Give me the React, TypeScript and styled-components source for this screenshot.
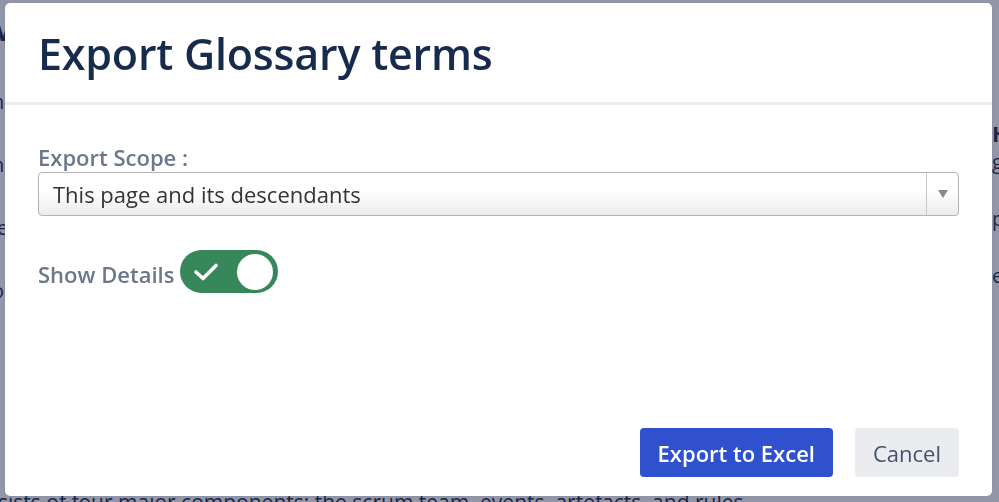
import React, {useState} from 'react';
import styled, {createGlobalStyle} from 'styled-components';

const GlobalStyle = createGlobalStyle`
  html, body {
    margin: 0;
    padding: 0;
    background: #ffffff;
    font-family: "Open Sans", "Noto Sans", "Liberation Sans", sans-serif;
  }
`;

function App() {
    const [details, setDetails] = useState(true);

    return (
        <>
            <GlobalStyle/>
            <Page>
                <LeftColumn>
                    <h1>V</h1>
                    <p>n</p>
                    <p>n</p>
                    <p>le</p>
                    <p>o</p>
                </LeftColumn>
                <RightColumn>
                    <h3>H</h3>
                    <a>g</a>
                    <p>p</p>
                    <p>e</p>
                </RightColumn>
                <BottomLine>sists of four major components: the scrum team, events, artefacts, and rules.</BottomLine>
            </Page>
            <Blanket>
                <Modal>
                    <Header>
                        <Title>Export Glossary terms</Title>
                    </Header>
                    <Body>
                        <Label>Export Scope :</Label>
                        <Select>
                            <SelectText>This page and its descendants</SelectText>
                            <SelectArrow>
                                <svg width="10" height="8" viewBox="0 0 10 8">
                                    <path d="M0 0 L10 0 L5 8 Z" fill="#888"/>
                                </svg>
                            </SelectArrow>
                        </Select>
                        <ToggleRow>
                            <ToggleLabel>Show Details</ToggleLabel>
                            <Toggle $on={details} onClick={() => setDetails(!details)}>
                                <svg width="26" height="20" viewBox="0 0 26 20">
                                    <path d="M3 10 L10 16.5 L23 3.5" fill="none" stroke="#fff" strokeWidth="3.6"
                                          strokeLinecap="round" strokeLinejoin="round"/>
                                </svg>
                                <Knob/>
                            </Toggle>
                        </ToggleRow>
                    </Body>
                    <Footer>
                        <Button $primary>Export to Excel</Button>
                        <Button>Cancel</Button>
                    </Footer>
                </Modal>
            </Blanket>
        </>
    )
}

const Page = styled.div`
  position: relative;
  width: 999px;
  height: 502px;
  overflow: hidden;
  color: #172b4d;
  font-size: 20px;
`;
const LeftColumn = styled.div`
  margin-left: -8px;
  h1 {
    margin: 8px 0 40px;
    font-size: 36px;
    font-weight: 600;
    line-height: 40px;
  }
  p {
    margin: 0 0 36px;
  }
`;
const RightColumn = styled.div`
  position: absolute;
  top: 118px;
  left: 992px;
  h3 {
    margin: 0;
    font-size: 22px;
  }
  a {
    display: block;
    text-decoration: underline;
  }
  p {
    margin: 30px 0 0;
  }
`;
const BottomLine = styled.div`
  position: absolute;
  left: -2px;
  top: 488px;
  white-space: nowrap;
  font-size: 21px;
`;
const Blanket = styled.div`
  position: fixed;
  inset: 0;
  background: rgba(30, 35, 70, 0.48);
  display: flex;
  padding: 3px 7px 6px 5px;
  box-sizing: border-box;
`;
const Modal = styled.div`
  flex: 1;
  background: #fff;
  border-radius: 5px;
  display: flex;
  flex-direction: column;
  box-shadow: 0 0 1px rgba(9, 30, 66, 0.3);
`;
const Header = styled.div`
  height: 99px;
  padding: 0 33px;
  display: flex;
  align-items: center;
  border-bottom: 3px solid #ebecf0;
`;
const Title = styled.h2`
  margin: 2px 0 0;
  font-size: 43px;
  font-weight: 600;
  color: #172b4d;
  letter-spacing: -0.2px;
`;
const Body = styled.div`
  flex: 1;
  padding: 38px 33px 0 33px;
`;
const Label = styled.div`
  font-size: 22px;
  font-weight: 600;
  color: #6b778c;
  line-height: 28px;
`;
const Select = styled.div`
  margin-top: 1px;
  height: 42px;
  border: 1px solid #b3b3b3;
  border-radius: 4px;
  background: linear-gradient(#ffffff 40%, #ececec);
  display: flex;
  align-items: center;
`;
const SelectText = styled.div`
  flex: 1;
  padding-left: 14px;
  font-size: 22px;
  color: #333;
`;
const SelectArrow = styled.div`
  width: 31px;
  height: 100%;
  border-left: 1px solid #c8c8c8;
  display: flex;
  align-items: center;
  justify-content: center;
`;
const ToggleRow = styled.div`
  margin-top: 34px;
  display: flex;
  align-items: center;
  gap: 6px;
`;
const ToggleLabel = styled.div`
  font-size: 22px;
  font-weight: 600;
  color: #6b778c;
  padding-top: 4px;
`;
const Toggle = styled.div<{ $on: boolean }>`
  width: 98px;
  height: 43px;
  box-sizing: border-box;
  border-radius: 22px;
  background: ${p => p.$on ? '#36875a' : '#a5adba'};
  display: flex;
  align-items: center;
  justify-content: space-between;
  padding: 0 5px 0 13px;
  cursor: pointer;
`;
const Knob = styled.div`
  width: 36px;
  height: 36px;
  border-radius: 50%;
  background: #fff;
`;
const Footer = styled.div`
  display: flex;
  justify-content: flex-end;
  gap: 22px;
  padding: 0 33px 19px;
`;
const Button = styled.button<{ $primary?: boolean }>`
  height: 49px;
  border: none;
  border-radius: 4px;
  padding: 0 18px;
  font-family: inherit;
  font-size: 22px;
  font-weight: ${p => p.$primary ? 600 : 400};
  background: ${p => p.$primary ? '#2f51cd' : '#ebecf0'};
  color: ${p => p.$primary ? '#fff' : '#42526e'};
  min-width: ${p => p.$primary ? '192px' : '103px'};
`;

export default App;
